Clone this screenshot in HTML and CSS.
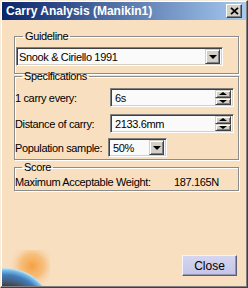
FILE: index.html
```html
<!DOCTYPE html>
<html lang="en">

<head>
  <meta charset="UTF-8">
  <title>Carry Analysis (Manikin1)</title>
  <link rel="stylesheet" href="styles.css">
</head>

<body>
  <div class="window">
    <div class="titlebar">
      <span class="title">Carry Analysis (Manikin1)</span>
      <span class="close-x">
        <svg width="9" height="8" viewBox="0 0 9 8">
          <path d="M1 0.8 L8 7.2 M8 0.8 L1 7.2" stroke="#000" stroke-width="1.8" fill="none" />
        </svg>
      </span>
    </div>

    <div class="content">
      <fieldset class="group guideline">
        <legend>Guideline</legend>
        <div class="combo wide">
          <span class="value">Snook &amp; Ciriello 1991</span>
          <span class="drop"><span class="tri-down"></span></span>
        </div>
      </fieldset>

      <fieldset class="group specs">
        <legend>Specifications</legend>
        <div class="row">
          <label>1 carry every:</label>
          <div class="spin">
            <span class="value">6s</span>
            <span class="arrows">
              <span class="arrow"><span class="tri-up"></span></span>
              <span class="arrow"><span class="tri-small-down"></span></span>
            </span>
          </div>
        </div>
        <div class="row second">
          <label>Distance of carry:</label>
          <div class="spin">
            <span class="value">2133.6mm</span>
            <span class="arrows">
              <span class="arrow"><span class="tri-up"></span></span>
              <span class="arrow"><span class="tri-small-down"></span></span>
            </span>
          </div>
        </div>
        <div class="row third">
          <label class="short">Population sample:</label>
          <div class="combo small">
            <span class="value">50%</span>
            <span class="drop"><span class="tri-down"></span></span>
          </div>
        </div>
      </fieldset>

      <fieldset class="group score">
        <legend>Score</legend>
        <div class="score-row">
          <span class="score-label">Maximum Acceptable Weight:</span>
          <span class="score-value">187.165N</span>
        </div>
      </fieldset>

      <div class="actions">
        <svg class="globe" width="48" height="36" viewBox="0 0 48 36">
          <defs>
            <radialGradient id="glow" cx="30" cy="16" r="24" gradientUnits="userSpaceOnUse">
              <stop offset="0" stop-color="#f5a040" stop-opacity="1" />
              <stop offset="0.5" stop-color="#f6b468" stop-opacity="0.75" />
              <stop offset="1" stop-color="#f8dfc0" stop-opacity="0" />
            </radialGradient>
            <radialGradient id="earth" cx="3" cy="68" r="50" gradientUnits="userSpaceOnUse">
              <stop offset="0.6" stop-color="#34363e" />
              <stop offset="0.74" stop-color="#4a5c78" />
              <stop offset="0.86" stop-color="#3f7cbc" />
              <stop offset="0.95" stop-color="#78b8e6" />
              <stop offset="1" stop-color="#c8ecf8" />
            </radialGradient>
          </defs>
          <circle cx="30" cy="16" r="24" fill="url(#glow)" />
          <circle cx="3" cy="68" r="50" fill="url(#earth)" />
        </svg>
        <button class="close-btn">Close</button>
      </div>
    </div>
  </div>
</body>

</html>
```

FILE: styles.css
```css
body {
  margin: 0;
  padding: 0;
  background-color: #f8dfc0;
  font-family: "Liberation Sans", Arial, sans-serif;
  font-size: 11px;
  letter-spacing: -0.35px;
  color: #000;
}

.window {
  width: 248px;
  height: 288px;
  box-sizing: border-box;
  border: 1px solid;
  border-color: #f6ecdc #404040 #404040 #f6ecdc;
  box-shadow: inset -1px -1px 0 #808080, inset 1px 1px 0 #fff;
  padding: 1px;
  display: flex;
  flex-direction: column;
  background-color: #f8dfc0;
}

.titlebar {
  height: 18px;
  display: flex;
  align-items: center;
  justify-content: space-between;
  padding: 0 4px 0 4px;
  background: linear-gradient(to right, #0a246a, #a6caf0);
  color: #fff;
  font-weight: bold;
  font-size: 12px;
  letter-spacing: 0;
}

.close-x {
  width: 16px;
  height: 14px;
  box-sizing: border-box;
  display: flex;
  align-items: center;
  justify-content: center;
  background-color: #d4d0c8;
  border: 1px solid;
  border-color: #fff #404040 #404040 #fff;
  box-shadow: inset -1px -1px 0 #808080;
}

.content {
  flex: 1;
  display: flex;
  flex-direction: column;
  padding: 11px 9px 10px 12px;
}

.group {
  width: 225px;
  box-sizing: border-box;
  margin: 0;
  padding: 0;
  min-width: 0;
  border: 1px solid #8c8c8c;
  box-shadow: 1px 1px 0 #fff, inset 1px 1px 0 #fff;
}

legend {
  margin-left: 7px;
  padding: 0 2px;
  line-height: 11px;
}

.guideline {
  padding: 5px 0 7px 1px;
}

.specs {
  margin-top: -3px;
  padding: 6px 0 2px 0;
}

.score {
  margin-top: 2px;
  padding: 3px 0 1px 0;
}

.row {
  display: flex;
  align-items: center;
}

.row label {
  width: 95px;
  white-space: nowrap;
}

.row label.short {
  width: 93px;
}

.second {
  margin-top: 7px;
}

.third {
  margin-top: 5px;
}

/* sunken white fields */
.combo,
.spin {
  height: 19px;
  box-sizing: border-box;
  display: flex;
  align-items: center;
  background-color: #fafafa;
  border: 1px solid;
  border-color: #808080 #fff #fff #808080;
  box-shadow: inset 1px 1px 0 #404040, inset -1px -1px 0 #d4d0c8;
  padding: 2px 2px 2px 4px;
  white-space: nowrap;
}

.combo.wide {
  width: 207px;
  padding-left: 2px;
}

.combo.small {
  width: 59px;
}

.spin {
  width: 124px;
}

.value {
  flex: 1;
}

.drop {
  width: 15px;
  height: 15px;
  box-sizing: border-box;
  display: flex;
  align-items: center;
  justify-content: center;
  background-color: #d4d0c8;
  border: 1px solid;
  border-color: #d4d0c8 #404040 #404040 #d4d0c8;
  box-shadow: inset 1px 1px 0 #fff, inset -1px -1px 0 #808080;
}

.tri-down {
  width: 0;
  height: 0;
  border-left: 4px solid transparent;
  border-right: 4px solid transparent;
  border-top: 4px solid #000;
}

.arrows {
  display: flex;
  flex-direction: column;
  width: 16px;
  height: 15px;
}

.arrow {
  flex: 1;
  box-sizing: border-box;
  display: flex;
  align-items: center;
  justify-content: center;
  background-color: #d4d0c8;
  border: 1px solid;
  border-color: #d4d0c8 #404040 #404040 #d4d0c8;
  box-shadow: inset 1px 1px 0 #fff, inset -1px -1px 0 #808080;
}

.tri-up {
  width: 0;
  height: 0;
  border-left: 4px solid transparent;
  border-right: 4px solid transparent;
  border-bottom: 3px solid #000;
}

.tri-small-down {
  width: 0;
  height: 0;
  border-left: 4px solid transparent;
  border-right: 4px solid transparent;
  border-top: 3px solid #000;
}

.score-row {
  display: flex;
  line-height: 13px;
  white-space: nowrap;
}

.score-label {
  width: 159px;
}

.actions {
  margin-top: auto;
  display: flex;
  justify-content: space-between;
  align-items: flex-end;
}

.globe {
  display: block;
  margin: 0 0 -10px -12px;
}

.close-btn {
  width: 55px;
  height: 21px;
  margin-bottom: 0;
  padding: 0;
  font-family: "Liberation Sans", Arial, sans-serif;
  font-size: 12px;
  color: #000;
  background: linear-gradient(#d6d6f0, #c4c4e6);
  border: 1px solid;
  border-color: #f4f4ff #5c5c78 #5c5c78 #f4f4ff;
  box-shadow: inset -1px -1px 0 #9494b4;
}
```
